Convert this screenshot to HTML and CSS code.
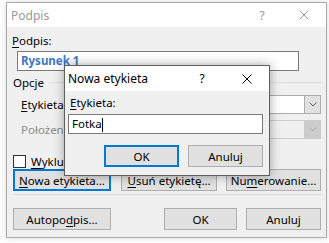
FILE: index.html
```html
<!DOCTYPE html>
<html lang="pl">
<head>
  <meta charset="UTF-8" />
  <title>Podpis</title>
  <link rel="stylesheet" href="styles.css">
</head>
<body>

  <!-- Podpis dialog (inactive) -->
  <div class="win outer">
    <div class="titlebar">
      <span class="title">Podpis</span>
      <span class="help">?</span>
      <span class="close">
        <svg width="10" height="10" viewBox="0 0 10 10"><path d="M0.5 0.5 L9.5 9.5 M9.5 0.5 L0.5 9.5" stroke="#999" stroke-width="1" fill="none"/></svg>
      </span>
    </div>
    <div class="content">
      <div class="label"><u>P</u>odpis:</div>
      <div class="textbox caption">Rysunek 1</div>
      <div class="group"><span>Opcje</span></div>
      <div class="row">
        <span class="flabel"><u>E</u>tykieta:</span>
        <div class="select">
          <span class="arrow"><svg width="8" height="5" viewBox="0 0 8 5"><path d="M0.5 0.5 L4 4 L7.5 0.5" stroke="#606060" fill="none"/></svg></span>
        </div>
      </div>
      <div class="row second">
        <span class="flabel disabled">Położenie:</span>
        <div class="select off">
          <span class="arrow"><svg width="8" height="5" viewBox="0 0 8 5"><path d="M0.5 0.5 L4 4 L7.5 0.5" stroke="#b0b0b0" fill="none"/></svg></span>
        </div>
      </div>
      <div class="check-row">
        <span class="checkbox"></span>
        <span><u>W</u>yklucz etykietę</span>
      </div>
      <div class="btn-row">
        <div class="btn default w98"><u>N</u>owa etykieta…</div>
        <div class="btn w96 gap10"><u>U</u>suń etykietę…</div>
        <div class="btn w95 gap9">Nu<u>m</u>erowanie…</div>
      </div>
      <div class="sep"></div>
      <div class="btn-row bottom">
        <div class="btn w98">Autopo<u>d</u>pis…</div>
        <div class="btn w73 push">OK</div>
        <div class="btn w75 gap9">Anuluj</div>
      </div>
    </div>
  </div>

  <!-- Nowa etykieta dialog (active, on top) -->
  <div class="win inner">
    <div class="titlebar">
      <span class="title">Nowa etykieta</span>
      <span class="help">?</span>
      <span class="close">
        <svg width="10" height="10" viewBox="0 0 10 10"><path d="M0.5 0.5 L9.5 9.5 M9.5 0.5 L0.5 9.5" stroke="#000" stroke-width="1" fill="none"/></svg>
      </span>
    </div>
    <div class="content">
      <div class="label"><u>E</u>tykieta:</div>
      <div class="textbox">Fotka<span class="caret"></span></div>
      <div class="btn-row">
        <div class="btn default w75">OK</div>
        <div class="btn w75 gap9">Anuluj</div>
      </div>
    </div>
  </div>

</body>
</html>
```

FILE: styles.css
```css
* {
  box-sizing: border-box;
}

body {
  margin: 0;
  padding: 2px 0 0 6px;
  width: 329px;
  height: 243px;
  overflow: hidden;
  position: relative;
  background-color: #fff;
  font-family: 'Noto Sans', sans-serif;
  font-size: 11.5px;
  color: #000;
}

u {
  text-decoration-thickness: 1px;
  text-underline-offset: 2px;
}

/* Window frame */
.win {
  background-color: #f0f0f0;
  border: 1px solid #aaa;
}

.titlebar {
  display: flex;
  align-items: center;
  background-color: #fff;
  height: 24px;
  padding-left: 4px;
}

.titlebar .title {
  flex: 1;
  white-space: nowrap;
  font-size: 12px;
}

.titlebar .help {
  width: 40px;
  text-align: center;
  font-size: 12px;
}

.titlebar .close {
  width: 44px;
  display: flex;
  justify-content: center;
}

/* Outer dialog */
.outer {
  width: 321px;
  height: 236px;
  box-shadow: 0 0 6px rgba(0, 0, 0, 0.15);
}

.outer .title,
.outer .help {
  color: #999;
}

.outer .content {
  padding: 6px 5px 0 6px;
}

.label {
  height: 16px;
  line-height: 16px;
  margin-left: -1px;
  white-space: nowrap;
}

.textbox {
  margin: 2px 0 0 4px;
  width: 282px;
  height: 20px;
  line-height: 18px;
  padding: 0 3px;
  border: 1px solid #7a7a7a;
  background-color: #fff;
  white-space: nowrap;
}

.textbox.caption {
  color: #3d78c0;
  font-weight: bold;
}

.group {
  display: flex;
  align-items: center;
  height: 16px;
  margin-top: 3px;
}

.group::after {
  content: "";
  flex: 1;
  height: 1px;
  margin-left: 6px;
  background-color: #dcdcdc;
}

.row {
  display: flex;
  align-items: center;
  height: 19px;
  margin-top: 5px;
}

.row.second {
  margin-top: 6px;
}

.flabel {
  padding-left: 8px;
  white-space: nowrap;
}

.disabled {
  color: #8c8c8c;
}

.select {
  margin-left: auto;
  width: 230px;
  height: 19px;
  border: 1px solid #adadad;
  background-color: #fff;
  display: flex;
  justify-content: flex-end;
}

.select .arrow {
  width: 16px;
  height: 17px;
  background-color: #e1e1e1;
  border-left: 1px solid #adadad;
  display: flex;
  align-items: center;
  justify-content: center;
}

.select.off {
  border-color: #ccc;
  background-color: #f0f0f0;
}

.select.off .arrow {
  background-color: #ccc;
  border-left-color: #ccc;
}

.check-row {
  display: flex;
  align-items: center;
  height: 13px;
  margin-top: 16px;
  white-space: nowrap;
}

.checkbox {
  width: 13px;
  height: 13px;
  border: 1px solid #333;
  background-color: #fff;
  margin-right: 5px;
  flex: none;
}

/* Buttons */
.btn-row {
  display: flex;
  height: 22px;
  margin-top: 1px;
}

.btn-row.bottom {
  margin-top: 13px;
}

.btn {
  height: 22px;
  border: 1px solid #adadad;
  background-color: #e1e1e1;
  display: flex;
  align-items: center;
  justify-content: center;
  white-space: nowrap;
}

.btn.default {
  border: 2px solid #0078d7;
}

.w98 { width: 98px; }
.w96 { width: 96px; }
.w95 { width: 95px; }
.w75 { width: 75px; }
.w73 { width: 73px; }
.gap10 { margin-left: 10px; }
.gap9 { margin-left: 9px; }
.push { margin-left: auto; }

.sep {
  height: 1px;
  margin-top: 3px;
  background-color: #dcdcdc;
}

/* Inner dialog, lies over the outer one */
.inner {
  position: absolute;
  left: 64px;
  top: 65px;
  width: 206px;
  height: 111px;
  border-color: #5f5f5f;
  box-shadow: 0 0 10px rgba(0, 0, 0, 0.35);
}

.inner .titlebar {
  height: 25px;
  padding-left: 3px;
}

.inner .help {
  width: 46px;
}

.inner .content {
  padding: 4px 6px 0 3px;
}

.inner .label {
  margin-left: 2px;
}

.inner .textbox {
  margin: 3px 0 0 0;
  width: 195px;
}

.caret {
  display: inline-block;
  width: 1px;
  height: 14px;
  background-color: #000;
  vertical-align: middle;
}

.inner .btn-row {
  justify-content: flex-end;
  margin-top: 11px;
}
```
